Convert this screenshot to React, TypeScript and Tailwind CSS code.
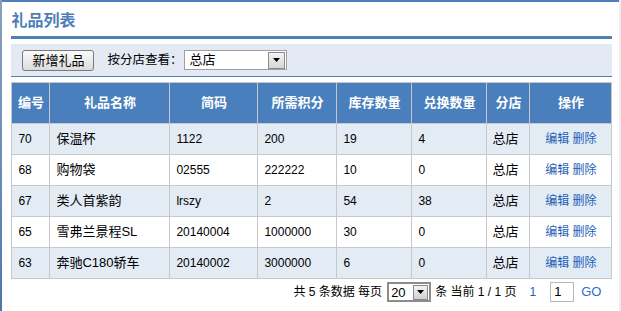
import React from "react";

const rows = [
  { id: "70", name: "保温杯", code: "1122", pts: "200", stock: "19", ex: "4" },
  { id: "68", name: "购物袋", code: "02555", pts: "222222", stock: "10", ex: "0" },
  { id: "67", name: "类人首紫韵", code: "lrszy", pts: "2", stock: "54", ex: "38" },
  { id: "65", name: "雪弗兰景程SL", code: "20140004", pts: "1000000", stock: "30", ex: "0" },
  { id: "63", name: "奔驰C180轿车", code: "20140002", pts: "3000000", stock: "6", ex: "0" },
];

const heads = ["编号", "礼品名称", "简码", "所需积分", "库存数量", "兑换数量", "分店", "操作"];

function Arrow() {
  return (
    <div className="w-[17px] h-[17px] bg-gradient-to-b from-[#f4f4f4] to-[#d6d6d6] border border-[#8a8a8a] flex items-center justify-center">
      <svg width="7" height="4" viewBox="0 0 7 4">
        <polygon points="0,0 7,0 3.5,4" fill="#000" />
      </svg>
    </div>
  );
}

export default function App() {
  return (
    <div
      className="w-[621px] h-[311px] flex bg-white overflow-hidden text-[12px] text-black"
      style={{ fontFamily: '"Liberation Sans", Arial, "Noto Sans CJK SC", sans-serif' }}
    >
      <div className="w-[3px] h-full bg-gradient-to-b from-[#8a9fbd] via-[#6f8db8] to-[#4f74ad]" />
      <div className="flex-1 border-t-2 border-[#4f7fb8] pl-[9px] pr-[7px] flex flex-col">
        <div className="mt-[10px] h-[18px] text-[16px] leading-[18px] font-bold text-[#4e7db8]">礼品列表</div>
        <div className="mt-[6px] h-[3px] bg-[#4f7fb8]" />
        <div className="mt-[5px] h-[33px] bg-[#e3eaf4] border-b border-[#4f7fb8] flex items-center pl-[11px]">
          <button className="w-[72px] h-[21px] rounded-[3px] border border-[#7a7a7a] bg-gradient-to-b from-[#fbfbfb] to-[#dcdcdc] text-[13px] leading-[19px] text-black">
            新增礼品
          </button>
          <span className="ml-[13px] text-[12.5px]">按分店查看：</span>
          <div className="ml-[2px] w-[103px] h-[20px] border border-[#a0a0a0] bg-white flex items-center justify-between pl-[4px] pr-[1px]">
            <span className="text-[13px]">总店</span>
            <Arrow />
          </div>
        </div>
        <table className="mt-[5px] w-[600px] table-fixed border-collapse border border-[#c8c8c8]">
          <colgroup>
            <col className="w-[38px]" />
            <col className="w-[120px]" />
            <col className="w-[88px]" />
            <col className="w-[79px]" />
            <col className="w-[75px]" />
            <col className="w-[75px]" />
            <col className="w-[43px]" />
            <col className="w-[82px]" />
          </colgroup>
          <thead>
            <tr className="h-[41px] bg-[#4a7fbd]">
              {heads.map((h) => (
                <th key={h} className="border border-[#c8c8c8] text-white font-bold text-[13px] text-center p-0">
                  {h}
                </th>
              ))}
            </tr>
          </thead>
          <tbody>
            {rows.map((r, i) => (
              <tr key={r.id} className={i % 2 === 0 ? "h-[31px] bg-[#e3ebf5]" : "h-[31px] bg-white"}>
                <td className="border border-[#c8c8c8] pl-[6px]">{r.id}</td>
                <td className="border border-[#c8c8c8] pl-[6px] text-[13px]">{r.name}</td>
                <td className="border border-[#c8c8c8] pl-[6px]">{r.code}</td>
                <td className="border border-[#c8c8c8] pl-[6px]">{r.pts}</td>
                <td className="border border-[#c8c8c8] pl-[6px]">{r.stock}</td>
                <td className="border border-[#c8c8c8] pl-[6px]">{r.ex}</td>
                <td className="border border-[#c8c8c8] pl-[5px] text-[13px]">总店</td>
                <td className="border border-[#c8c8c8] text-center text-[#1f5fb8]">编辑 删除</td>
              </tr>
            ))}
          </tbody>
        </table>
        <div className="mt-[3px] h-[20px] flex items-center justify-end pr-[11px] text-[12px]">
          <span>共 5 条数据 每页</span>
          <div className="ml-[5px] w-[44px] h-[20px] border-2 border-[#8c8c8c] bg-white flex items-center justify-between pl-[2px] pr-[1px]">
            <span className="text-[13px] leading-none">20</span>
            <div className="w-[15px] h-[15px] bg-gradient-to-b from-[#f4f4f4] to-[#d0d0d0] border border-[#8a8a8a] flex items-center justify-center">
              <svg width="7" height="4" viewBox="0 0 7 4">
                <polygon points="0,0 7,0 3.5,4" fill="#000" />
              </svg>
            </div>
          </div>
          <span className="ml-[4px]">条 当前 1 / 1 页</span>
          <span className="ml-[13px] text-[#1f5fb8]">1</span>
          <div className="ml-[14px] w-[24px] h-[20px] border border-[#b8b8b8] bg-white pl-[3px] text-[13px] leading-[18px]">1</div>
          <span className="ml-[7px] text-[#2f6fd0] text-[13px]">GO</span>
        </div>
      </div>
      <div className="w-[2px] h-full bg-[#eceef2]" />
    </div>
  );
}
